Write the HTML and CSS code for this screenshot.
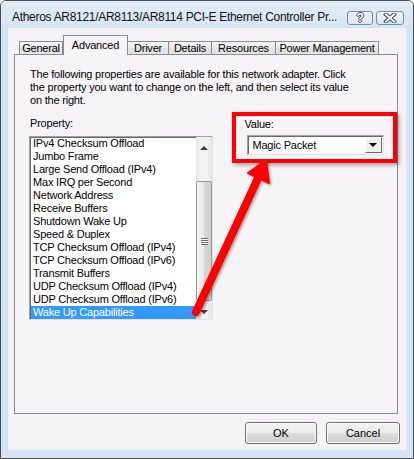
FILE: index.html
```html
<!DOCTYPE html>
<html lang="en">
  <head>
    <meta charset="UTF-8" />
    <link rel="stylesheet" href="styles.css">
    <title>Atheros AR8121/AR8113/AR8114 PCI-E Ethernet Controller Properties</title>
  </head>
  <body>
    <div class="window">
      <div class="titlebar">
        <span class="title">Atheros AR8121/AR8113/AR8114 PCI-E Ethernet Controller Pr...</span>
        <div class="cap-btns">
          <span class="cap-btn help">?</span>
          <span class="cap-btn close">
            <svg width="14" height="10" viewBox="0 0 14 10">
              <path d="M3 1.5 L11 8.5 M11 1.5 L3 8.5" stroke="#3d4a5e" stroke-width="4" stroke-linecap="square" fill="none"/>
              <path d="M3 1.5 L11 8.5 M11 1.5 L3 8.5" stroke="#fff" stroke-width="2" stroke-linecap="square" fill="none"/>
            </svg>
          </span>
        </div>
      </div>

      <div class="client">
        <div class="tabs">
          <div class="tab t-general">General</div>
          <div class="tab t-advanced active">Advanced</div>
          <div class="tab t-driver">Driver</div>
          <div class="tab t-details">Details</div>
          <div class="tab t-resources">Resources</div>
          <div class="tab t-power">Power Management</div>
        </div>

        <div class="panel">
          <p class="intro">The following properties are available for this network adapter. Click<br>the property you want to change on the left, and then select its value<br>on the right.</p>

          <div class="props">
            <div class="prop-col">
              <div class="label">Property:</div>
              <div class="listbox">
                <div class="items">
                  <div class="item">IPv4 Checksum Offload</div>
                  <div class="item">Jumbo Frame</div>
                  <div class="item">Large Send Offload (IPv4)</div>
                  <div class="item">Max IRQ per Second</div>
                  <div class="item">Network Address</div>
                  <div class="item">Receive Buffers</div>
                  <div class="item">Shutdown Wake Up</div>
                  <div class="item">Speed &amp; Duplex</div>
                  <div class="item">TCP Checksum Offload (IPv4)</div>
                  <div class="item">TCP Checksum Offload (IPv6)</div>
                  <div class="item">Transmit Buffers</div>
                  <div class="item">UDP Checksum Offload (IPv4)</div>
                  <div class="item">UDP Checksum Offload (IPv6)</div>
                  <div class="item selected">Wake Up Capabilities</div>
                </div>
                <div class="scrollbar">
                  <div class="sb-arrow up"></div>
                  <div class="sb-track">
                    <div class="sb-thumb"><span class="grip"></span></div>
                  </div>
                  <div class="sb-arrow down"></div>
                </div>
              </div>
            </div>

            <div class="value-col">
              <div class="label value-label">Value:</div>
              <div class="combo">
                <span class="combo-text">Magic Packet</span>
                <span class="combo-drop"></span>
              </div>
            </div>
          </div>
        </div>

        <div class="buttons">
          <button class="btn btn-ok">OK</button>
          <button class="btn btn-cancel">Cancel</button>
        </div>
      </div>

      <!-- annotation arrow drawn over the dialog -->
      <svg class="arrow" width="414" height="459" viewBox="0 0 414 459">
        <defs>
          <filter id="shade" x="-20%" y="-20%" width="140%" height="140%">
            <feDropShadow dx="1.5" dy="1.5" stdDeviation="1.2" flood-color="#000" flood-opacity="0.35"/>
          </filter>
        </defs>
        <g filter="url(#shade)">
          <line x1="196" y1="312" x2="259" y2="176" stroke="#f00" stroke-width="8" stroke-linecap="round"/>
          <polygon points="266,160 269,183 248,173" fill="#f00" stroke="#f00" stroke-width="2" stroke-linejoin="round"/>
        </g>
      </svg>
    </div>
  </body>
</html>
```

FILE: styles.css
```css
* {
  box-sizing: border-box;
}
body {
  margin: 0;
  background: #fff;
  font-family: "Liberation Sans", Arial, sans-serif;
  font-size: 11px;
  letter-spacing: -0.2px;
  color: #000;
}

.window {
  position: relative;
  width: 414px;
  height: 459px;
  border: 1px solid #464d55;
  border-radius: 6px 6px 0 0;
  background: #d6e5f5;
  padding: 0 7px 8px;
  display: flex;
  flex-direction: column;
}

/* title bar */
.titlebar {
  height: 27px;
  display: flex;
  align-items: flex-start;
  padding: 10px 9px 0 11px;
  background: linear-gradient(#e1ecf8, #d6e5f5);
  margin: 0 -7px;
  border-radius: 5px 5px 0 0;
}
.title {
  font-size: 12px;
  line-height: 14px;
  margin-top: -1px;
  letter-spacing: -0.3px;
  color: #111;
  white-space: nowrap;
}
.cap-btns {
  margin-left: auto;
  display: flex;
  gap: 3px;
}
.cap-btn {
  height: 14px;
  border: 1px solid #7d8ca3;
  border-radius: 3px;
  background: linear-gradient(#eef3fa, #dbe6f3);
  display: flex;
  align-items: center;
  justify-content: center;
}
.help {
  width: 26px;
  font-weight: bold;
  font-size: 12px;
  line-height: 12px;
  color: #fff;
  text-shadow: -1px 0 #3d4a5e, 1px 0 #3d4a5e, 0 -1px #3d4a5e, 0 1px #3d4a5e;
}
.close {
  width: 28px;
}

/* client area */
.client {
  flex: 1;
  background: #f5f2f5;
  display: flex;
  flex-direction: column;
}

.tabs {
  height: 26px;
  display: flex;
  align-items: flex-end;
  padding-left: 11px;
  position: relative;
  z-index: 1;
}
.tab {
  height: 13px;
  line-height: 12px;
  border: 1px solid #898c95;
  border-bottom: none;
  margin-left: -1px;
  text-align: center;
  background: linear-gradient(#f4f4f4, #e9e9e9 50%, #e0e0e0 51%, #e4e4e4);
}
.t-general { width: 44px; margin-left: 0; }
.t-advanced { width: 65px; margin-left: 0; }
.t-driver { width: 42px; }
.t-details { width: 44px; }
.t-resources { width: 65px; }
.t-power { width: 104px; }
.tab.active {
  height: 20px;
  margin-bottom: -1px;
  padding-top: 3px;
  background: #f7f4f7;
}

.panel {
  height: 360px;
  margin: 0 8px 0 6px;
  border: 1px solid #898c95;
  background: #f7f4f7;
  padding: 13px 0 0 14px;
}
.intro {
  margin: 0;
  line-height: 13px;
  padding-left: 1px;
}

.props {
  display: flex;
  margin-top: 5px;
  align-items: flex-start;
}
.label {
  line-height: 13px;
  padding-left: 1px;
}
.prop-col {
  width: 185px;
  padding-top: 5px;
}
.prop-col .label {
  margin-bottom: 6px;
}

.listbox {
  height: 184px;
  display: flex;
  background: #fff;
  border: 1px solid;
  border-color: #a0a0a0 #e3e3e3 #e3e3e3 #a0a0a0;
  box-shadow: inset 1px 1px 0 #696969;
  padding: 0 0 0 1px;
}
.items {
  flex: 1;
  overflow: hidden;
  display: flex;
  flex-direction: column;
}
.item {
  flex-shrink: 0;
  line-height: 13px;
  padding-left: 2px;
  white-space: nowrap;
}
.item.selected {
  background: #3399ff;
  color: #fff;
}

.scrollbar {
  width: 16px;
  display: flex;
  flex-direction: column;
  background: linear-gradient(90deg, #e6e6e6, #f2f2f2 30%, #f2f2f2 70%, #e6e6e6);
}
.sb-arrow {
  height: 17px;
  position: relative;
}
.sb-arrow::after {
  content: "";
  position: absolute;
  left: 4px;
  top: 7px;
  border: 4px solid transparent;
}
.sb-arrow.up::after {
  top: 5px;
  border-bottom: 4px solid #3a3a3a;
}
.sb-arrow.down::after {
  top: 8px;
  border-top: 4px solid #3a3a3a;
}
.sb-track {
  flex: 1;
  padding-top: 27px;
}
.sb-thumb {
  height: 120px;
  border: 1px solid #979797;
  border-radius: 2px;
  background: linear-gradient(90deg, #f4f4f4, #e8e8e8 50%, #d6d6d6 51%, #d0d0d0);
  display: flex;
  align-items: center;
  justify-content: center;
}
.grip {
  width: 7px;
  height: 7px;
  background: repeating-linear-gradient(#6b6b6b 0 1px, #f8f8f8 1px 2px);
}

.value-col {
  margin-left: 19px;
  width: 165px;
  border: 4px solid #f00;
  box-shadow: 2px 2px 4px rgba(0, 0, 0, 0.35);
  padding: 2px 9px 4px 7px;
}
.value-label {
  margin-bottom: 4px;
}
.combo {
  margin-left: 4px;
  height: 20px;
  display: flex;
  align-items: center;
  background: #fff;
  border: 1px solid;
  border-color: #a0a0a0 #e3e3e3 #e3e3e3 #a0a0a0;
  box-shadow: inset 1px 1px 0 #696969;
  padding: 1px 1px 1px 4px;
}
.combo-text {
  flex: 1;
}
.combo-drop {
  width: 17px;
  height: 16px;
  background: #f0f0f0;
  border: 1px solid;
  border-color: #fff #696969 #696969 #fff;
  position: relative;
}
.combo-drop::after {
  content: "";
  position: absolute;
  left: 3px;
  top: 5px;
  border: 4px solid transparent;
  border-top: 4px solid #000;
}

/* dialog buttons */
.buttons {
  display: flex;
  justify-content: flex-end;
  gap: 9px;
  margin-top: 8px;
  padding-right: 6px;
}
.btn {
  height: 22px;
  font: inherit;
  color: #000;
  border: 1px solid #707070;
  border-radius: 3px;
  background: linear-gradient(#f2f2f2, #ebebeb 50%, #dddddd 51%, #cfcfcf);
  box-shadow: inset 0 0 0 1px #fcfcfc;
  padding: 0;
}
.btn-ok { width: 72px; }
.btn-cancel { width: 74px; }

.arrow {
  position: absolute;
  left: -1px;
  top: -1px;
  pointer-events: none;
}
```
